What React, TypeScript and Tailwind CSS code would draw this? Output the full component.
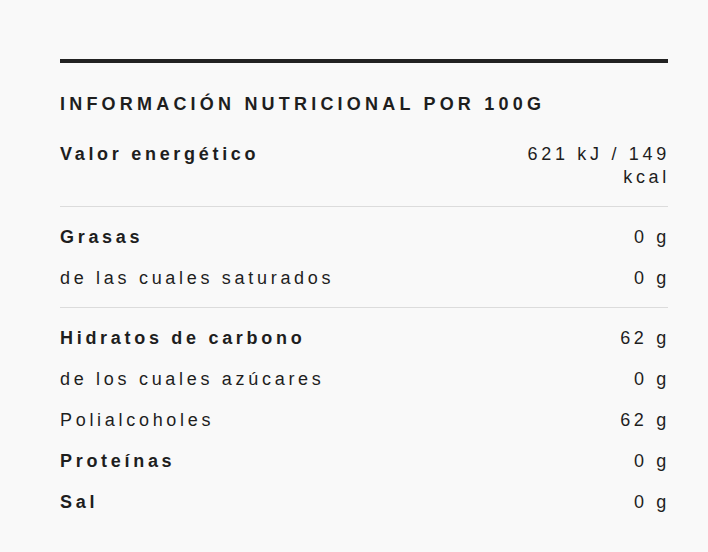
import React from 'react'

interface Row {
  label: string
  value: string
  bold?: boolean
}

const groups: Row[][] = [
  [{ label: 'Valor energético', value: '621 kJ / 149 kcal', bold: true }],
  [
    { label: 'Grasas', value: '0 g', bold: true },
    { label: 'de las cuales saturados', value: '0 g' },
  ],
  [
    { label: 'Hidratos de carbono', value: '62 g', bold: true },
    { label: 'de los cuales azúcares', value: '0 g' },
    { label: 'Polialcoholes', value: '62 g' },
    { label: 'Proteínas', value: '0 g', bold: true },
    { label: 'Sal', value: '0 g', bold: true },
  ],
]

export default function App() {
  return (
    <div className="min-h-[552px] w-[708px] bg-[#f9f9f9] pl-[60px] pt-[59px] font-['Liberation_Sans',Arial,sans-serif] text-[18px] leading-[23px] tracking-[3.7px] text-[#1e1e1e]">
      <div className="w-[608px]">
        {/* heavy top rule */}
        <div className="h-[4px] bg-[#222]" />

        <h2 className="mt-[30px] mb-[18px] text-[18px] font-bold uppercase leading-[23px] tracking-[4.2px]">
          Información nutricional por 100g
        </h2>

        {groups.map((rows, gi) => (
          <div
            key={gi}
            className={`${gi === 0 ? 'pt-0' : 'pt-[10px]'} pb-[8px] ${gi < groups.length - 1 ? 'border-b border-[#dcdcdc]' : ''}`}
          >
            {rows.map(r => (
              <div key={r.label} className="flex items-start justify-between py-[9px]">
                <span className={r.bold ? 'font-bold' : ''}>{r.label}</span>
                <span className="-mr-[2px] w-[152px] text-right">{r.value}</span>
              </div>
            ))}
          </div>
        ))}
      </div>
    </div>
  )
}
